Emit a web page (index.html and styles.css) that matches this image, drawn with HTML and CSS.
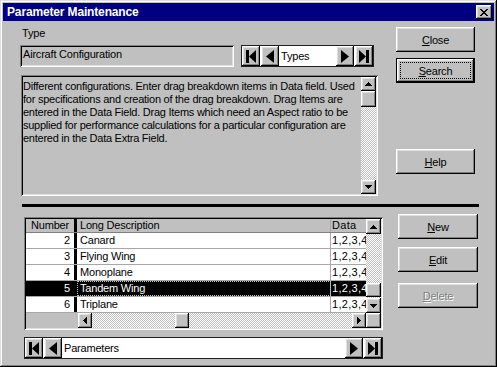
FILE: index.html
```html
<!DOCTYPE html>
<html>
<head>
<title>Parameter Maintenance</title>
<link rel="stylesheet" href="styles.css">
</head>
<body>

<div class="Window">

<div class="TitleBar">
<span class="TitleText">Parameter Maintenance</span>
<div class="CloseBox Raised"><svg width="8" height="7" viewBox="0 0 8 7"><path d="M0 0h2v1H0zM6 0h2v1H6zM1 1h2v1H1zM5 1h2v1H5zM2 2h4v1H2zM3 3h2v1H3zM2 4h4v1H2zM1 5h2v1H1zM5 5h2v1H5zM0 6h2v1H0zM6 6h2v1H6z"/></svg></div>
</div>

<div class="TopPart">

<div class="TopLeft">
<div class="TypeLabel">Type</div>
<div class="TypeRow">
<div class="ReadField Sunken">Aircraft Configuration</div>
<div class="NavBar NavSmall">
<button class="NavBtn Raised"><svg width="10" height="13" viewBox="0 0 10 13"><rect x="0" y="0" width="3" height="13"/><polygon points="10,0 3,6.5 10,13"/></svg></button>
<button class="NavBtn Raised"><svg width="8" height="13" viewBox="0 0 8 13"><polygon points="8,0 0,6.5 8,13"/></svg></button>
<div class="NavText">Types</div>
<button class="NavBtn Raised"><svg width="8" height="13" viewBox="0 0 8 13"><polygon points="0,0 8,6.5 0,13"/></svg></button>
<button class="NavBtn Raised"><svg width="10" height="13" viewBox="0 0 10 13"><polygon points="0,0 7,6.5 0,13"/><rect x="7" y="0" width="3" height="13"/></svg></button>
</div>
</div>

<div class="DescBox Sunken">
<div class="DescText">Different configurations. Enter drag breakdown items in Data field. Used<br>for specifications and creation of the drag breakdown. Drag Items are<br>entered in the Data Field. Drag Items which need an Aspect ratio to be<br>supplied for performance calculations for a particular configuration are<br>entered in the Data Extra Field.</div>
<div class="VScroll DescScroll">
<div class="ScrollBtn Raised UpBtn"><svg width="7" height="4" viewBox="0 0 7 4"><path d="M3 0h1v1H3zM2 1h3v1H2zM1 2h5v1H1zM0 3h7v1H0z"/></svg></div>
<div class="Thumb Raised"></div>
<div class="Track"></div>
<div class="ScrollBtn Raised DownBtn"><svg width="7" height="4" viewBox="0 0 7 4"><path d="M0 0h7v1H0zM1 1h5v1H1zM2 2h3v1H2zM3 3h1v1H3z"/></svg></div>
</div>
</div>
</div>

<div class="TopRight">
<button class="Btn Raised CloseBtn"><u>C</u>lose</button>
<div class="DefaultFrame"><button class="Btn Raised SearchBtn"><span class="FocusRect"><u>S</u>earch</span></button></div>
<button class="Btn Raised HelpBtn"><u>H</u>elp</button>
</div>

</div>

<div class="Separator"></div>

<div class="BottomPart">

<div class="BottomLeft">
<div class="Grid Sunken">
<div class="GridMain">
<div class="GridTable">
<div class="GridRow HeadRow"><div class="Cell Num">Number</div><div class="Cell Desc">Long Description</div><div class="Cell Data">Data</div></div>
<div class="GridRow"><div class="Cell Num">2</div><div class="Cell Desc">Canard</div><div class="Cell Data">1,2,3,4</div></div>
<div class="GridRow"><div class="Cell Num">3</div><div class="Cell Desc">Flying Wing</div><div class="Cell Data">1,2,3,4</div></div>
<div class="GridRow"><div class="Cell Num">4</div><div class="Cell Desc">Monoplane</div><div class="Cell Data">1,2,3,4</div></div>
<div class="GridRow Selected"><div class="Cell Num">5</div><div class="Cell Desc">Tandem Wing</div><div class="Cell Data">1,2,3,4</div></div>
<div class="GridRow"><div class="Cell Num">6</div><div class="Cell Desc">Triplane</div><div class="Cell Data">1,2,3,4</div></div>
</div>
<div class="VScroll GridScroll">
<div class="ScrollBtn Raised UpBtn"><svg width="7" height="4" viewBox="0 0 7 4"><path d="M3 0h1v1H3zM2 1h3v1H2zM1 2h5v1H1zM0 3h7v1H0z"/></svg></div>
<div class="Track"></div>
<div class="Thumb Raised"></div>
<div class="Track TrackSmall"></div>
<div class="ScrollBtn Raised DownBtn"><svg width="7" height="4" viewBox="0 0 7 4"><path d="M0 0h7v1H0zM1 1h5v1H1zM2 2h3v1H2zM3 3h1v1H3z"/></svg></div>
</div>
</div>
<div class="HScroll">
<div class="HBlank"></div>
<div class="HBtn Raised"><svg width="4" height="7" viewBox="0 0 4 7"><path d="M3 0h1v7H3zM2 1h1v5H2zM1 2h1v3H1zM0 3h1v1H0z"/></svg></div>
<div class="Track HTrackLeft"></div>
<div class="HThumb Raised"></div>
<div class="Track HTrackRight"></div>
<div class="HBtn Raised"><svg width="4" height="7" viewBox="0 0 4 7"><path d="M0 0h1v7H0zM1 1h1v5H1zM2 2h1v3H2zM3 3h1v1H3z"/></svg></div>
<div class="Corner Raised"></div>
</div>
</div>

<div class="NavBar NavWide">
<button class="NavBtn Raised"><svg width="10" height="13" viewBox="0 0 10 13"><rect x="0" y="0" width="3" height="13"/><polygon points="10,0 3,6.5 10,13"/></svg></button>
<button class="NavBtn Raised"><svg width="8" height="13" viewBox="0 0 8 13"><polygon points="8,0 0,6.5 8,13"/></svg></button>
<div class="NavText">Parameters</div>
<button class="NavBtn Raised"><svg width="8" height="13" viewBox="0 0 8 13"><polygon points="0,0 8,6.5 0,13"/></svg></button>
<button class="NavBtn Raised"><svg width="10" height="13" viewBox="0 0 10 13"><polygon points="0,0 7,6.5 0,13"/><rect x="7" y="0" width="3" height="13"/></svg></button>
</div>
</div>

<div class="BottomRight">
<button class="Btn Raised NewBtn"><u>N</u>ew</button>
<button class="Btn Raised EditBtn"><u>E</u>dit</button>
<button class="Btn Raised DeleteBtn" disabled><u>D</u>elete</button>
</div>

</div>

</div>

</body>
</html>
```

FILE: styles.css
```css
body{
margin:0;
background-color:#c0c0c0;
font-family:"Liberation Sans", Arial, sans-serif;
font-size:11px;
letter-spacing:-0.2px;
color:#000;
}

button{
font:inherit;
letter-spacing:inherit;
color:#000;
border:0;
padding:0;
margin:0;
}

.Raised{
background-color:#c0c0c0;
box-shadow:inset -1px -1px #000, inset 1px 1px #fff, inset -2px -2px #808080, inset 2px 2px #dfdfdf;
}

.Sunken{
box-shadow:inset 1px 1px #808080, inset -1px -1px #fff, inset 2px 2px #000, inset -2px -2px #dfdfdf;
}

.Window{
width:497px;
height:367px;
box-sizing:border-box;
padding:3px;
background-color:#c0c0c0;
box-shadow:inset -1px -1px #000, inset 1px 1px #dfdfdf, inset -2px -2px #808080, inset 2px 2px #fff;
overflow:hidden;
}

/* title bar */

.TitleBar{
height:18px;
background-color:#000080;
color:#fff;
display:flex;
align-items:center;
justify-content:space-between;
padding:0 2px 0 4px;
}

.TitleText{
font-weight:bold;
font-size:12px;
letter-spacing:-0.15px;
}

.CloseBox{
width:16px;
height:14px;
display:flex;
align-items:center;
justify-content:center;
}

/* top half */

.TopPart{
display:flex;
height:183px;
}

.TopLeft{
margin-left:17px;
width:358px;
}

.TypeLabel{
margin-top:6px;
line-height:13px;
padding-left:2px;
}

.TypeRow{
display:flex;
margin-top:5px;
height:22px;
}

.ReadField{
width:214px;
box-sizing:border-box;
padding:3px 3px 0 3px;
line-height:13px;
}

.NavBar{
display:flex;
box-sizing:border-box;
height:22px;
border:1px solid #202020;
background-color:#fff;
}

.NavSmall{
margin-left:7px;
width:133px;
}

.NavWide{
margin-top:7px;
width:359px;
}

.NavBtn{
width:18px;
height:20px;
display:flex;
align-items:center;
justify-content:center;
}

.NavBtn:first-child,
.NavText + .NavBtn{
margin-right:1px;
}

.NavText{
flex:1;
line-height:20px;
padding-left:2px;
white-space:nowrap;
overflow:hidden;
}

.DescBox{
display:flex;
margin-top:8px;
margin-left:1px;
width:357px;
height:121px;
box-sizing:border-box;
padding:2px;
}

.DescText{
flex:1;
padding-top:3px;
line-height:13px;
letter-spacing:-0.25px;
white-space:nowrap;
overflow:hidden;
}

/* scroll bars */

.VScroll{
width:15px;
display:flex;
flex-direction:column;
}

.ScrollBtn{
height:14px;
display:flex;
align-items:center;
justify-content:center;
}

.Thumb{
height:16px;
}

.GridScroll .ScrollBtn{
height:15px;
}

.GridScroll .Thumb{
height:14px;
}

.Track{
flex:1;
background-color:#fff;
background-image:repeating-conic-gradient(#c0c0c0 0 25%, #fff 0 50%);
background-size:2px 2px;
}

.TrackSmall{
flex:0 0 1px;
}

/* right buttons */

.TopRight{
margin-left:18px;
width:79px;
display:flex;
flex-direction:column;
}

.Btn{
display:block;
width:100%;
height:25px;
text-align:center;
}

.CloseBtn{
margin-top:6px;
}

.DefaultFrame{
margin-top:6px;
border:1px solid #000;
height:23px;
}

.SearchBtn{
height:23px;
padding:3px;
box-sizing:border-box;
}

.FocusRect{
display:flex;
align-items:center;
justify-content:center;
height:100%;
border:1px dotted #000;
box-sizing:border-box;
}

.HelpBtn{
margin-top:66px;
}

.Separator{
margin-left:19px;
width:457px;
height:3px;
background-color:#000;
}

/* bottom half */

.BottomPart{
display:flex;
}

.BottomLeft{
margin-left:21px;
width:359px;
}

.Grid{
margin-top:10px;
height:113px;
box-sizing:border-box;
padding:2px;
background-color:#c0c0c0;
}

.GridMain{
display:flex;
height:94px;
}

.GridTable{
width:340px;
background-color:#fff;
}

.GridRow{
display:flex;
height:16px;
box-sizing:border-box;
border-bottom:1px solid #a8a8a8;
line-height:15px;
}

.HeadRow{
height:14px;
line-height:13px;
background-color:#c0c0c0;
border-bottom:1px solid #808080;
}

.Cell{
box-sizing:border-box;
white-space:nowrap;
overflow:hidden;
}

.Num{
width:51px;
text-align:right;
padding-right:4px;
border-right:3px solid #000;
}

.HeadRow .Num{
text-align:center;
padding-right:0;
}

.Desc{
width:254px;
padding-left:3px;
border-right:1px solid #a8a8a8;
}

.Data{
width:35px;
padding-left:1px;
letter-spacing:0.3px;
}

.Selected{
background-color:#000;
color:#fff;
}

.Selected .Desc{
outline:1px dotted #c0c0c0;
outline-offset:-1px;
}

.HScroll{
display:flex;
height:15px;
}

.HBlank{
width:52px;
}

.HBtn{
width:14px;
display:flex;
align-items:center;
justify-content:center;
}

.HTrackLeft{
flex:0 0 83px;
}

.HThumb{
width:14px;
}

.Corner{
width:15px;
}

.BottomRight{
margin-left:15px;
width:80px;
display:flex;
flex-direction:column;
}

.NewBtn{
margin-top:7px;
}

.EditBtn{
margin-top:8px;
}

.DeleteBtn{
margin-top:11px;
color:#808080;
text-shadow:1px 1px #fff;
}
```
